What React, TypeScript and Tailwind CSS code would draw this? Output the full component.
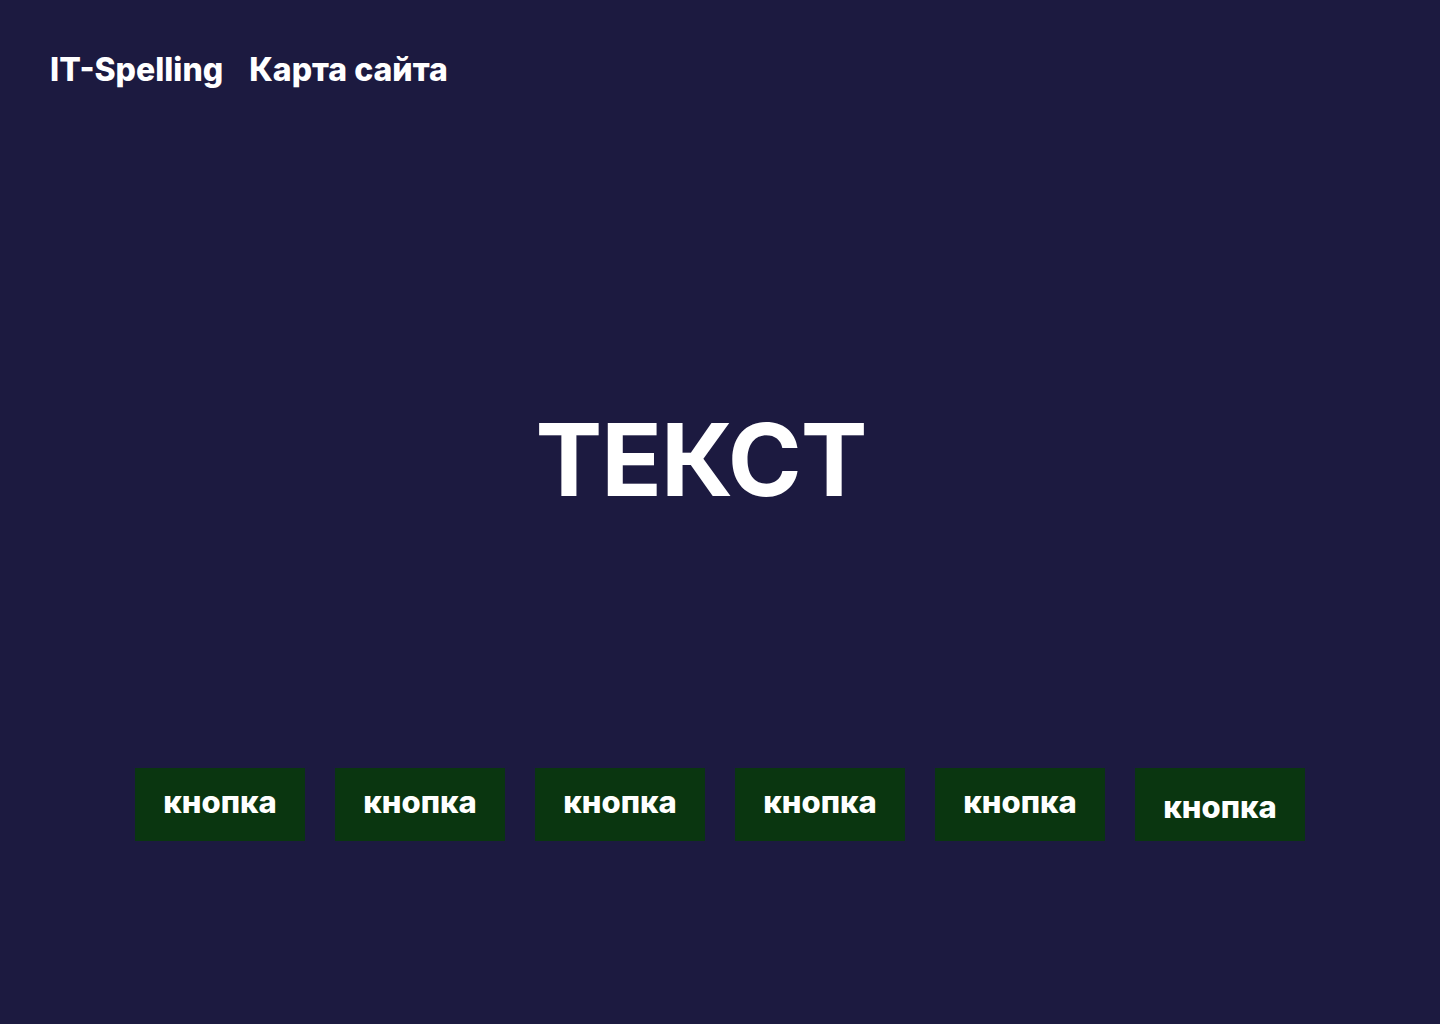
export default function App() {
  const buttons = ['кнопка', 'кнопка', 'кнопка', 'кнопка', 'кнопка', 'кнопка'];

  return (
    <div className="w-full h-[1024px] bg-[#1c1a40] text-white font-['Inter',sans-serif] flex flex-col">
      <header className="flex items-center gap-[26px] px-[50px] pt-[48px] h-[92px] text-[32px] font-extrabold">
        <a href="#">IT-Spelling</a>
        <a href="#">Карта сайта</a>
      </header>

      <main className="flex-1 flex flex-col items-center">
        <h1 className="mt-[318px] h-[100px] flex items-center text-[100px] font-bold leading-none tracking-[-0.01em] -translate-x-[19px]">
          ТЕКСТ
        </h1>

        <div className="mt-[258px] flex gap-[30px]">
          {buttons.map((label, i) => (
            <button
              key={i}
              className={
                'w-[170px] h-[73px] bg-[#0a3610] text-[31px] font-extrabold flex justify-center ' +
                (i === 5 ? 'pt-[16px]' : 'pt-[11px]')
              }
            >
              {label}
            </button>
          ))}
        </div>
      </main>
    </div>
  );
}
